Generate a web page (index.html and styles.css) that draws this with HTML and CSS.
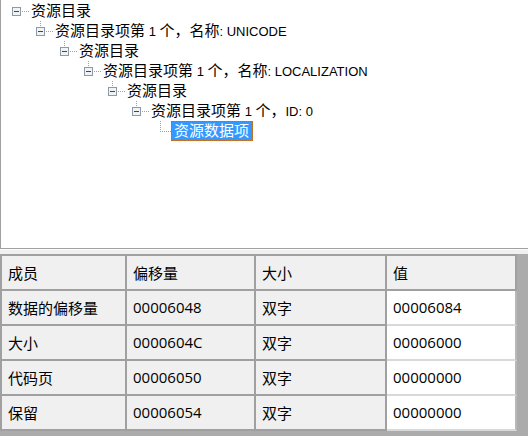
FILE: index.html
```html
<!DOCTYPE html>
<html lang="zh-CN">
<head>
<meta charset="utf-8">
<title>资源目录</title>
<link rel="stylesheet" href="styles.css">
</head>
<body>
<div class="tree">
  <div class="row l0">
    <svg class="exp" width="19" height="20" viewBox="0 0 19 20"><g fill="#a0a0a0"><rect x="10" y="10" width="1" height="1"/><rect x="12" y="10" width="1" height="1"/><rect x="14" y="10" width="1" height="1"/><rect x="16" y="10" width="1" height="1"/></g><rect x="0.5" y="6.5" width="8" height="8" fill="#f1f2f4" stroke="#8c99a8"/><rect x="2" y="10" width="5" height="1" fill="#26478a"/></svg>
    <span class="label">资源目录</span>
  </div>
  <div class="row l1">
    <svg class="exp" width="19" height="20" viewBox="0 0 19 20"><g fill="#a0a0a0"><rect x="4" y="0" width="1" height="1"/><rect x="4" y="2" width="1" height="1"/><rect x="4" y="4" width="1" height="1"/><rect x="10" y="10" width="1" height="1"/><rect x="12" y="10" width="1" height="1"/><rect x="14" y="10" width="1" height="1"/><rect x="16" y="10" width="1" height="1"/></g><rect x="0.5" y="6.5" width="8" height="8" fill="#f1f2f4" stroke="#8c99a8"/><rect x="2" y="10" width="5" height="1" fill="#26478a"/></svg>
    <span class="label">资源目录项第<span class="lat"> 1 </span>个，名称<span class="lat">: UNICODE</span></span>
  </div>
  <div class="row l2">
    <svg class="exp" width="19" height="20" viewBox="0 0 19 20"><g fill="#a0a0a0"><rect x="4" y="0" width="1" height="1"/><rect x="4" y="2" width="1" height="1"/><rect x="4" y="4" width="1" height="1"/><rect x="10" y="10" width="1" height="1"/><rect x="12" y="10" width="1" height="1"/><rect x="14" y="10" width="1" height="1"/><rect x="16" y="10" width="1" height="1"/></g><rect x="0.5" y="6.5" width="8" height="8" fill="#f1f2f4" stroke="#8c99a8"/><rect x="2" y="10" width="5" height="1" fill="#26478a"/></svg>
    <span class="label">资源目录</span>
  </div>
  <div class="row l3">
    <svg class="exp" width="19" height="20" viewBox="0 0 19 20"><g fill="#a0a0a0"><rect x="4" y="0" width="1" height="1"/><rect x="4" y="2" width="1" height="1"/><rect x="4" y="4" width="1" height="1"/><rect x="10" y="10" width="1" height="1"/><rect x="12" y="10" width="1" height="1"/><rect x="14" y="10" width="1" height="1"/><rect x="16" y="10" width="1" height="1"/></g><rect x="0.5" y="6.5" width="8" height="8" fill="#f1f2f4" stroke="#8c99a8"/><rect x="2" y="10" width="5" height="1" fill="#26478a"/></svg>
    <span class="label">资源目录项第<span class="lat"> 1 </span>个，名称<span class="lat">: LOCALIZATION</span></span>
  </div>
  <div class="row l4">
    <svg class="exp" width="19" height="20" viewBox="0 0 19 20"><g fill="#a0a0a0"><rect x="4" y="0" width="1" height="1"/><rect x="4" y="2" width="1" height="1"/><rect x="4" y="4" width="1" height="1"/><rect x="10" y="10" width="1" height="1"/><rect x="12" y="10" width="1" height="1"/><rect x="14" y="10" width="1" height="1"/><rect x="16" y="10" width="1" height="1"/></g><rect x="0.5" y="6.5" width="8" height="8" fill="#f1f2f4" stroke="#8c99a8"/><rect x="2" y="10" width="5" height="1" fill="#26478a"/></svg>
    <span class="label">资源目录</span>
  </div>
  <div class="row l5">
    <svg class="exp" width="19" height="20" viewBox="0 0 19 20"><g fill="#a0a0a0"><rect x="4" y="0" width="1" height="1"/><rect x="4" y="2" width="1" height="1"/><rect x="4" y="4" width="1" height="1"/><rect x="10" y="10" width="1" height="1"/><rect x="12" y="10" width="1" height="1"/><rect x="14" y="10" width="1" height="1"/><rect x="16" y="10" width="1" height="1"/></g><rect x="0.5" y="6.5" width="8" height="8" fill="#f1f2f4" stroke="#8c99a8"/><rect x="2" y="10" width="5" height="1" fill="#26478a"/></svg>
    <span class="label">资源目录项第<span class="lat"> 1 </span>个，<span class="lat">ID: 0</span></span>
  </div>
  <div class="row l6">
    <svg class="leaf" width="15" height="20" viewBox="0 0 15 20"><g fill="#a0a0a0"><rect x="4" y="0" width="1" height="1"/><rect x="4" y="2" width="1" height="1"/><rect x="4" y="4" width="1" height="1"/><rect x="4" y="6" width="1" height="1"/><rect x="4" y="8" width="1" height="1"/><rect x="4" y="10" width="1" height="1"/><rect x="6" y="10" width="1" height="1"/><rect x="8" y="10" width="1" height="1"/><rect x="10" y="10" width="1" height="1"/><rect x="12" y="10" width="1" height="1"/><rect x="14" y="10" width="1" height="1"/></g></svg>
    <span class="label selected">资源数据项</span>
  </div>
</div>
<div class="splitter"></div>
<div class="grid-wrap">
  <div class="grid">
    <div class="cell">成员</div><div class="cell">偏移量</div><div class="cell">大小</div><div class="cell">值</div>
    <div class="cell">数据的偏移量</div><div class="cell">00006048</div><div class="cell">双字</div><div class="cell val">00006084</div>
    <div class="cell">大小</div><div class="cell">0000604C</div><div class="cell">双字</div><div class="cell val">00006000</div>
    <div class="cell">代码页</div><div class="cell">00006050</div><div class="cell">双字</div><div class="cell val">00000000</div>
    <div class="cell">保留</div><div class="cell">00006054</div><div class="cell">双字</div><div class="cell val">00000000</div>
  </div>
</div>
</body>
</html>
```

FILE: styles.css
```css
html, body {
  margin: 0;
  padding: 0;
}
body {
  width: 528px;
  height: 436px;
  overflow: hidden;
  background: #f0f0f0;
  font-family: "Liberation Sans", "Noto Sans CJK SC", sans-serif;
  color: #000;
}
.tree {
  box-sizing: border-box;
  height: 249px;
  background: #fff;
  border-left: 1px solid #a0a0a0;
  border-bottom: 1px solid #a0a0a0;
  padding-top: 1px;
  font-size: 15px;
}
.row {
  display: flex;
  align-items: center;
  height: 20px;
  white-space: nowrap;
}
.row svg {
  flex: none;
  display: block;
}
.l0 { padding-left: 11px; }
.l1 { padding-left: 35px; }
.l2 { padding-left: 59px; }
.l3 { padding-left: 83px; }
.l4 { padding-left: 107px; }
.l5 { padding-left: 131px; }
.l6 { padding-left: 155px; }
.label {
  line-height: 20px;
  font-family: "Liberation Sans", "Noto Sans CJK SC", sans-serif;
}
.lat {
  font-size: 13px;
}
.selected {
  box-sizing: border-box;
  height: 20px;
  line-height: 18px;
  padding: 0 3px 0 2px;
  background: #3399ff;
  color: #fff;
  border: 1px dotted #c46a1a;
}
.splitter {
  box-sizing: border-box;
  height: 5px;
  border-top: 1px solid #fcfcfc;
  background: #f0f0f0;
}
.grid-wrap {
  height: 182px;
  background: #ababab;
}
.grid {
  display: grid;
  grid-template-columns: 125px 129px 131px 130px;
  grid-auto-rows: 35px;
  width: 515px;
  border-left: 2px solid #a0a0a0;
  border-top: 2px solid #a0a0a0;
  font-family: "Open Sans", "Noto Sans CJK SC", sans-serif;
  font-size: 15px;
}
.cell {
  box-sizing: border-box;
  display: flex;
  align-items: center;
  padding-left: 6px;
  padding-bottom: 1px;
  background: #f0f0f0;
  border-right: 2px solid #a0a0a0;
  border-bottom: 2px solid #a0a0a0;
  white-space: nowrap;
}
.cell.val {
  background: #fff;
  border-bottom-color: #d9d9d9;
  border-right-color: #b8b8b8;
}
```
